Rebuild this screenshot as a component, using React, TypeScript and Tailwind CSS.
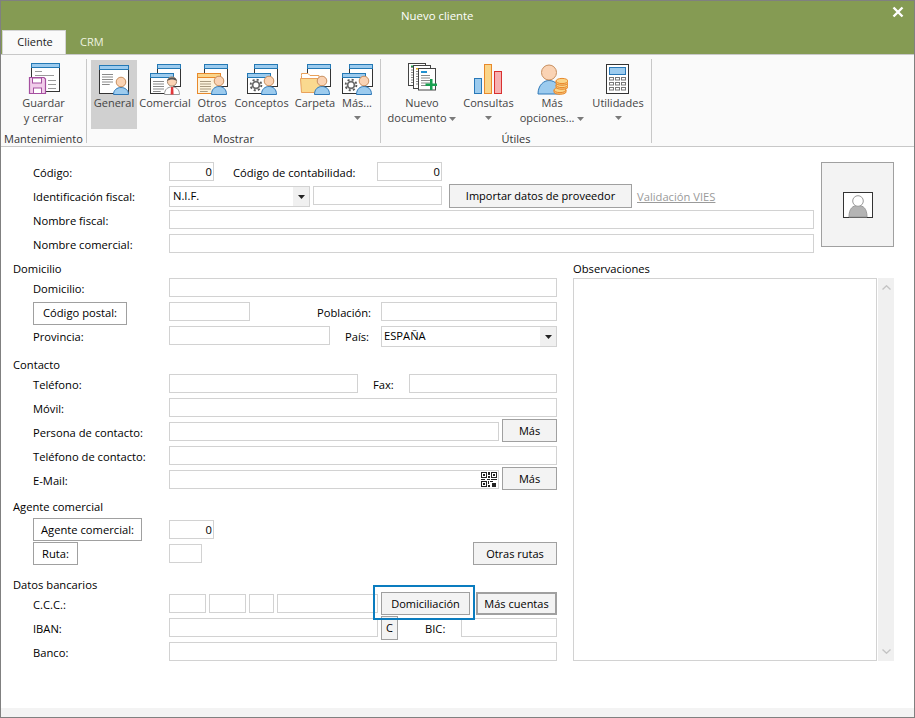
import React from "react";

const Person = ({ x, y }: { x: number; y: number }) => (
  <g>
    <path d={`M${x - 7.5} 31.5 C${x - 7.5} ${y + 8} ${x - 4} ${y + 5.5} ${x} ${y + 5.5} C${x + 4} ${y + 5.5} ${x + 7.5} ${y + 8} ${x + 7.5} 31.5 Z`} fill="#9ccbee" stroke="#2e78b8" />
    <circle cx={x} cy={y} r={4.8} fill="#fad3b4" stroke="#c88f5f" />
  </g>
);

const Win = ({ x, y, w, h, band = "#9ccbee", edge = "#2479b5", fill = "#fff", frame = "#333" }: { x: number; y: number; w: number; h: number; band?: string; edge?: string; fill?: string; frame?: string }) => (
  <g>
    <rect x={x + 0.5} y={y + 0.5} width={w} height={h} fill={fill} stroke={frame} />
    <rect x={x + 0.5} y={y + 0.5} width={w} height={4} fill={band} stroke={edge} />
  </g>
);

const Lines = ({ x, y, w, n, c = "#8a8a8a" }: { x: number; y: number; w: number; n: number; c?: string }) => (
  <g stroke={c}>
    {Array.from({ length: n }).map((_, i) => (
      <line key={i} x1={x} x2={x + (i === n - 1 ? w * 0.7 : w)} y1={y + i * 2.5 + 0.5} y2={y + i * 2.5 + 0.5} />
    ))}
  </g>
);

const Gear = ({ x, y }: { x: number; y: number }) => (
  <g fill="none">
    <circle cx={x} cy={y} r={5.4} stroke="#5a5a5a" strokeWidth={1.8} strokeDasharray="2.1 2.14" />
    <circle cx={x} cy={y} r={3.4} stroke="#6a6a6a" strokeWidth={1.8} />
  </g>
);

const Ico = ({ children }: { children: React.ReactNode }) => (
  <svg width="32" height="32" viewBox="0 0 32 32" className="shrink-0">{children}</svg>
);

const IcoSave = () => (
  <Ico>
    <Win x={3} y={0} w={28} h={28} />
    <g stroke="#9a9a9a"><line x1="7" x2="14" y1="8.5" y2="8.5" /><line x1="7" x2="26" y1="12.5" y2="12.5" /><line x1="20" x2="28" y1="17.5" y2="17.5" /><line x1="20" x2="28" y1="21.5" y2="21.5" /><line x1="20" x2="28" y1="25.5" y2="25.5" /></g>
    <path d="M1.5 14.5H16L17.5 16V30.5H1.5Z" fill="#f1cdea" stroke="#a550a0" strokeWidth="1.2" />
    <rect x="4.5" y="15" width="9" height="5" fill="#fff" stroke="#a550a0" />
    <rect x="5.5" y="25" width="8" height="5.5" fill="#fff" stroke="#a550a0" />
  </Ico>
);
const IcoGeneral = () => (
  <Ico>
    <Win x={1} y={2} w={29} h={28} />
    <Lines x={4} y={11} w={11} n={5} />
    <Person x={23} y={19} />
  </Ico>
);
const IcoComercial = () => (
  <Ico>
    <Win x={8} y={1} w={23} h={22} />
    <Win x={1} y={10} w={23} h={20} />
    <Lines x={4} y={18} w={11} n={5} />
    <path d="M15.5 31.5C15.5 26 19 24 23 24C27 24 30.5 26 30.5 31.5Z" fill="#fff" stroke="#9a9a9a" />
    <path d="M22 24H24.2L24.6 31.5H21.6Z" fill="#e2383a" />
    <circle cx="23" cy="18.5" r="4.6" fill="#fad3b4" stroke="#a58a70" />
    <path d="M18.4 18C18 13.5 28 13 27.6 18C25 16 21 16 18.4 18Z" fill="#555" />
  </Ico>
);
const IcoOtros = () => (
  <Ico>
    <Win x={8} y={1} w={23} h={22} />
    <Win x={1} y={10} w={23} h={20} band="#fad58a" edge="#e8892b" fill="#fdf3dc" frame="#e8892b" />
    <Lines x={4} y={18} w={11} n={5} c="#a89a80" />
    <Person x={23} y={18} />
  </Ico>
);
const IcoConceptos = () => (
  <Ico>
    <Win x={8} y={1} w={23} h={22} />
    <Win x={1} y={10} w={23} h={20} />
    <Gear x={10} y={22} />
    <Person x={23} y={18} />
  </Ico>
);
const IcoCarpeta = () => (
  <Ico>
    <Win x={8} y={1} w={23} h={22} />
    <path d="M2.5 12.5V10.5H9L11 12.5H20V18H2.5Z" fill="#fff" stroke="#e9a15b" />
    <path d="M1.5 15.5H23.5V29.5H2.5Z" fill="#fad98f" stroke="#e9a15b" />
    <Person x={23} y={18} />
  </Ico>
);
const IcoDoc = () => (
  <Ico>
    <rect x="2.5" y="0.5" width="17" height="22" fill="#fff" stroke="#444" />
    <Lines x={5} y={4} w={11} n={7} />
    <rect x="5" y="2.5" width="6" height="1.5" fill="#1a9a4a" />
    <rect x="7.5" y="2.5" width="17" height="23" fill="#fff" stroke="#444" />
    <rect x="10" y="5" width="6" height="1.5" fill="#e8b020" />
    <Lines x={10} y={8} w={11} n={6} />
    <rect x="12.5" y="5.5" width="17" height="21.5" fill="#fff" stroke="#444" />
    <rect x="15" y="8" width="6" height="2" fill="#2090d0" />
    <Lines x={15} y={12} w={9} n={5} />
    <rect x="24" y="16" width="2.5" height="11" fill="#18a050" />
    <rect x="19.5" y="20.5" width="11.5" height="2.5" fill="#18a050" />
  </Ico>
);
const IcoChart = () => (
  <Ico>
    <rect x="1.5" y="15.5" width="7" height="15" fill="#9ccbee" stroke="#2878b8" />
    <rect x="11.5" y="1.5" width="7" height="29" fill="#fad58a" stroke="#e8892b" />
    <rect x="21.5" y="8.5" width="7" height="22" fill="#f7b0b0" stroke="#d93030" />
  </Ico>
);
const Coin = ({ x, y }: { x: number; y: number }) => (
  <g>
    <path d={`M${x - 6} ${y}V${y + 2}C${x - 6} ${y + 5} ${x + 6} ${y + 5} ${x + 6} ${y + 2}V${y}`} fill="#f7c27a" stroke="#e8892b" />
    <ellipse cx={x} cy={y} rx={6} ry={2.6} fill="#fad58a" stroke="#e8892b" />
  </g>
);
const IcoMore = () => (
  <Ico>
    <path d="M2 31C2 22 8 17.5 13 17.5C19 17.5 24 22 24 31Z" fill="#9ccbee" stroke="#2e78b8" />
    <circle cx="13" cy="9.5" r="7.5" fill="#fad3b4" stroke="#c88f5f" />
    <Coin x={24} y={27} />
    <Coin x={26} y={22} />
    <Coin x={26} y={18} />
  </Ico>
);
const IcoCalc = () => (
  <Ico>
    <rect x="4.5" y="1.5" width="22" height="29" fill="#fff" stroke="#333" />
    <rect x="7.5" y="4.5" width="16" height="7" fill="#9ccbee" stroke="#2878b8" />
    <g fill="none" stroke="#777">
      {[14.5, 19.5, 24.5].map((y) => [8, 14, 20].map((x) => <rect key={`${x}-${y}`} x={x - 0.5} y={y} width={4} height={2.5} />))}
    </g>
  </Ico>
);

const Caret = () => (
  <svg width="7" height="4" viewBox="0 0 7 4" className="inline-block"><path d="M0 0H7L3.5 4Z" fill="#7a7a7a" /></svg>
);

const RB = ({ w, icon, active, children }: { w: string; icon: React.ReactNode; active?: boolean; children: React.ReactNode }) => (
  <div className={`${w} ${active ? "bg-[#d0d0d0]" : ""} flex h-[69px] flex-col items-center pt-[3px] text-center leading-[15px] whitespace-nowrap text-[#444]`}>
    {icon}
    {children}
  </div>
);

const Sep = () => <div className="mt-[4px] h-[84px] w-px bg-[#c8c8c8]" />;

const Field = ({ w, children, right }: { w: string; children?: React.ReactNode; right?: boolean }) => (
  <div className={`${w} ${right ? "justify-end pr-[1px]" : "pl-[3px]"} flex h-[19px] shrink-0 items-center border border-[#d2d2d2] bg-white leading-[15px] text-black`}>
    {children}
  </div>
);

const Select = ({ w, text, pad = "pl-[3px]" }: { w: string; text: string; pad?: string }) => (
  <div className={`${w} ${pad} flex h-[21px] shrink-0 items-center justify-between border border-[#d2d2d2] bg-white text-black`}>
    <span className="-mt-[1px]">{text}</span>
    <div className="flex h-full w-[16px] items-center justify-center bg-[#f0f0f0]">
      <svg width="7" height="4" viewBox="0 0 7 4"><path d="M0 0H7L3.5 4Z" fill="#222" /></svg>
    </div>
  </div>
);

const Btn = ({ w, h = "h-[23px]", cls = "", children }: { w: string; h?: string; cls?: string; children: React.ReactNode }) => (
  <div className={`${w} ${h} ${cls} flex shrink-0 items-center justify-center border border-[#a0a0a0] bg-[#f3f3f3] pt-[1px] text-[11px] text-black`}>{children}</div>
);

const LabelBtn = ({ w, cls = "", children }: { w: string; cls?: string; children: React.ReactNode }) => (
  <div className={`${w} ${cls} flex h-[23px] shrink-0 items-center justify-center border border-[#a0a0a0] bg-white text-black`}>{children}</div>
);

const Label = ({ w = "w-[136px]", cls = "", children }: { w?: string; cls?: string; children?: React.ReactNode }) => (
  <div className={`${w} ${cls} h-[19px] shrink-0 pt-[1px] leading-[19px] whitespace-nowrap text-black`}>{children}</div>
);

const Row = ({ children }: { children: React.ReactNode }) => (
  <div className="flex h-6 items-start pl-[20px]">{children}</div>
);

const Heading = ({ h, pb, children }: { h: string; pb: string; children: React.ReactNode }) => (
  <div className={`${h} ${pb} flex items-end leading-[15px] text-black`}>{children}</div>
);

const Qr = () => (
  <svg width="16" height="15" viewBox="0 0 16 15" shapeRendering="crispEdges">
    <g fill="none" stroke="#222">
      <rect x="0.5" y="0.5" width="5" height="5" />
      <rect x="10.5" y="0.5" width="5" height="5" />
      <rect x="0.5" y="9.5" width="5" height="5" />
    </g>
    <g fill="#222">
      <rect x="2" y="2" width="2" height="2" /><rect x="12" y="2" width="2" height="2" /><rect x="2" y="11" width="2" height="2" />
      <rect x="7" y="0" width="2" height="3" /><rect x="7" y="4" width="2" height="2" /><rect x="0" y="7" width="4" height="1" /><rect x="6" y="7" width="3" height="1" />
      <rect x="10" y="7" width="6" height="1" /><rect x="7" y="9" width="1" height="3" /><rect x="9" y="9" width="3" height="1" /><rect x="11" y="11" width="4" height="4" /><rect x="7" y="13" width="2" height="2" />
    </g>
  </svg>
);

export default function App() {
  return (
    <div className="flex h-[718px] w-[915px] flex-col overflow-hidden border border-[#808080] bg-white font-['Open_Sans',sans-serif] text-[11.2px]">
      {/* title bar */}
      <div className="flex h-[53px] shrink-0 flex-col bg-[#859b53]">
        <div className="flex h-[29px] shrink-0 items-center justify-between pl-[400px] pr-[10px] text-[11.4px] text-white">
          <span className="w-[74px] whitespace-nowrap">Nuevo cliente</span>
          <svg width="12" height="12" viewBox="0 0 12 12" className="mb-[8px]"><path d="M1.5 1.5L10.5 10.5M10.5 1.5L1.5 10.5" stroke="#fff" strokeWidth="2.4" /></svg>
        </div>
        <div className="flex flex-1 items-stretch pl-[1px] text-[11px]">
          <div className="flex w-[64px] items-center justify-center border-x border-t border-[#d4d4d4] bg-[#fafafa] pl-[2px] text-[#222]">Cliente</div>
          <div className="ml-[14px] flex items-center text-[#eef3e0]">CRM</div>
        </div>
      </div>

      {/* ribbon */}
      <div className="flex h-[93px] shrink-0 border-y border-[#c8c8c8] bg-[#fafafa] text-[11px]">
        <div className="flex w-[85px] flex-col pt-[5px]">
          <div className="flex pl-[1px]">
            <RB w="w-[83px]" icon={<IcoSave />}>
              <span>Guardar</span>
              <span>y cerrar</span>
            </RB>
          </div>
          <div className="mt-[2px] text-center leading-[15px] whitespace-nowrap text-[#333]">Mantenimiento</div>
        </div>
        <Sep />
        <div className="flex w-[293px] flex-col pt-[5px]">
          <div className="flex gap-[2px] pl-[4px]">
            <RB w="w-[46px]" active icon={<IcoGeneral />}><span>General</span></RB>
            <RB w="w-[52px]" icon={<IcoComercial />}><span>Comercial</span></RB>
            <RB w="w-[38px]" icon={<IcoOtros />}><span>Otros</span><span>datos</span></RB>
            <RB w="w-[57px]" icon={<IcoConceptos />}><span>Conceptos</span></RB>
            <RB w="w-[46px]" icon={<IcoCarpeta />}><span>Carpeta</span></RB>
            <RB w="w-[34px]" icon={<IcoConceptos />}><span>Más...</span><span className="mt-[5px] leading-[4px]"><Caret /></span></RB>
          </div>
          <div className="mt-[2px] text-center leading-[15px] text-[#333]">Mostrar</div>
        </div>
        <Sep />
        <div className="flex w-[270px] flex-col pt-[5px]">
          <div className="flex gap-[2px] pl-[3px]">
            <RB w="w-[76px]" icon={<IcoDoc />}><span>Nuevo</span><span>documento <Caret /></span></RB>
            <RB w="w-[53px]" icon={<IcoChart />}><span>Consultas</span><span className="mt-[5px] leading-[4px]"><Caret /></span></RB>
            <RB w="w-[70px]" icon={<IcoMore />}><span>Más</span><span>opciones... <Caret /></span></RB>
            <RB w="w-[58px]" icon={<IcoCalc />}><span>Utilidades</span><span className="mt-[5px] leading-[4px]"><Caret /></span></RB>
          </div>
          <div className="mt-[2px] text-center leading-[15px] text-[#333]">Útiles</div>
        </div>
        <Sep />
      </div>

      {/* form */}
      <div className="flex-1 pl-[12px] pt-[15px]">
        <div className="flex h-[96px]">
          <div className="w-[801px]">
            <Row>
              <Label>Código:</Label>
              <Field w="w-[45px]" right>0</Field>
              <Label w="w-[144px]" cls="ml-[19px]">Código de contabilidad:</Label>
              <Field w="w-[65px]" right>0</Field>
            </Row>
            <Row>
              <Label>Identificación fiscal:</Label>
              <Select w="w-[141px]" text="N.I.F." />
              <Field w="w-[129px] ml-[3px]" />
              <Btn w="w-[183px]" h="h-[24px]" cls="-mt-[2px] ml-[7px]">Importar datos de proveedor</Btn>
              <span className="ml-[5px] pt-[1px] leading-[19px] whitespace-nowrap text-[#9a9a9a] underline">Validación VIES</span>
            </Row>
            <Row>
              <Label>Nombre fiscal:</Label>
              <Field w="w-[645px]" />
            </Row>
            <Row>
              <Label>Nombre comercial:</Label>
              <Field w="w-[645px]" />
            </Row>
          </div>
          <div className="ml-[7px] flex h-[85px] w-[73px] items-center justify-center border border-[#a0a0a0] bg-[#f3f3f3]">
            <svg width="30" height="26" viewBox="0 0 30 26">
              <rect x="0.5" y="0.5" width="29" height="25" fill="#fff" stroke="#333" />
              <path d="M6 25C6 16 10 13.5 15 13.5C20 13.5 24 16 24 25Z" fill="#b4b4b4" stroke="#9a9a9a" />
              <circle cx="15" cy="9" r="5.3" fill="#fff" stroke="#9a9a9a" />
            </svg>
          </div>
        </div>

        <div className="flex">
          <div className="w-[544px]">
            <Heading h="h-[20px]" pb="pb-[2px]">Domicilio</Heading>
            <Row>
              <Label>Domicilio:</Label>
              <Field w="w-[388px]" />
            </Row>
            <Row>
              <LabelBtn w="w-[94px]">Código postal:</LabelBtn>
              <Field w="w-[81px] ml-[42px]" />
              <Label w="w-[64px]" cls="ml-[67px]">Población:</Label>
              <Field w="w-[176px]" />
            </Row>
            <Row>
              <Label>Provincia:</Label>
              <Field w="w-[161px]" />
              <Label w="w-[36px]" cls="ml-[15px]">País:</Label>
              <Select w="w-[176px]" text="ESPAÑA" pad="pl-[2px]" />
            </Row>
            <Heading h="h-[24px]" pb="pb-[2px]">Contacto</Heading>
            <Row>
              <Label>Teléfono:</Label>
              <Field w="w-[189px]" />
              <Label w="w-[36px]" cls="ml-[15px]">Fax:</Label>
              <Field w="w-[148px]" />
            </Row>
            <Row>
              <Label>Móvil:</Label>
              <Field w="w-[388px]" />
            </Row>
            <Row>
              <Label>Persona de contacto:</Label>
              <Field w="w-[330px]" />
              <Btn w="w-[55px]" cls="-mt-[3px] ml-[3px]">Más</Btn>
            </Row>
            <Row>
              <Label>Teléfono de contacto:</Label>
              <Field w="w-[388px]" />
            </Row>
            <Row>
              <Label>E-Mail:</Label>
              <div className="flex h-[19px] w-[330px] shrink-0 items-center justify-end border border-[#d2d2d2] bg-white pr-[1px]"><Qr /></div>
              <Btn w="w-[55px]" cls="-mt-[3px] ml-[3px]">Más</Btn>
            </Row>
            <Heading h="h-[26px]" pb="pb-[6px]">Agente comercial</Heading>
            <Row>
              <LabelBtn w="w-[109px]" cls="-mt-[2px] pt-[1px]">Agente comercial:</LabelBtn>
              <Field w="w-[45px] ml-[27px]" right>0</Field>
            </Row>
            <Row>
              <LabelBtn w="w-[45px]" cls="-mt-[2px] pt-[1px]">Ruta:</LabelBtn>
              <Field w="w-[33px] ml-[91px]" />
              <Btn w="w-[84px]" cls="-mt-[2px] ml-[271px]">Otras rutas</Btn>
            </Row>
            <Heading h="h-[26px]" pb="pb-[2px]">Datos bancarios</Heading>
            <Row>
              <Label>C.C.C.:</Label>
              <Field w="w-[37px]" />
              <Field w="w-[37px] ml-[3px]" />
              <Field w="w-[25px] ml-[3px]" />
              <Field w="w-[101px] ml-[3px]" />
              <div className="relative -mt-[2px] ml-[3px] h-[23px] w-[89px] shrink-0">
                <Btn w="w-[89px]">Domiciliación</Btn>
                <div className="absolute -left-[8px] -top-[7px] z-10 h-[35px] w-[102px] border-2 border-[#0a7cbf]" />
              </div>
              <Btn w="w-[81px]" cls="-mt-[2px] ml-[6px] border-2">Más cuentas</Btn>
            </Row>
            <Row>
              <Label>IBAN:</Label>
              <Field w="w-[209px]" />
              <Btn w="w-[17px]" h="h-[24px]" cls="-mt-[2px] ml-[3px]">C</Btn>
              <Label w="w-[36px]" cls="ml-[27px]">BIC:</Label>
              <Field w="w-[96px]" />
            </Row>
            <Row>
              <Label>Banco:</Label>
              <Field w="w-[388px]" />
            </Row>
          </div>
          <div className="ml-[16px] w-[321px]">
            <Heading h="h-[20px]" pb="pb-[2px]">Observaciones</Heading>
            <div className="flex h-[383px]">
              <div className="h-full w-[304px] border border-[#d2d2d2] bg-white" />
              <div className="ml-[1px] flex h-full w-[16px] flex-col items-center justify-between bg-[#f0f0f0] py-[7px]">
                <svg width="9" height="5" viewBox="0 0 9 5"><path d="M0.5 4.5L4.5 0.8L8.5 4.5" fill="none" stroke="#c4c4c4" strokeWidth="1.4" /></svg>
                <svg width="9" height="5" viewBox="0 0 9 5"><path d="M0.5 0.5L4.5 4.2L8.5 0.5" fill="none" stroke="#c4c4c4" strokeWidth="1.4" /></svg>
              </div>
            </div>
          </div>
        </div>
      </div>
      <div className="h-[9px] shrink-0 bg-[#f3f3f3]" />
    </div>
  );
}
